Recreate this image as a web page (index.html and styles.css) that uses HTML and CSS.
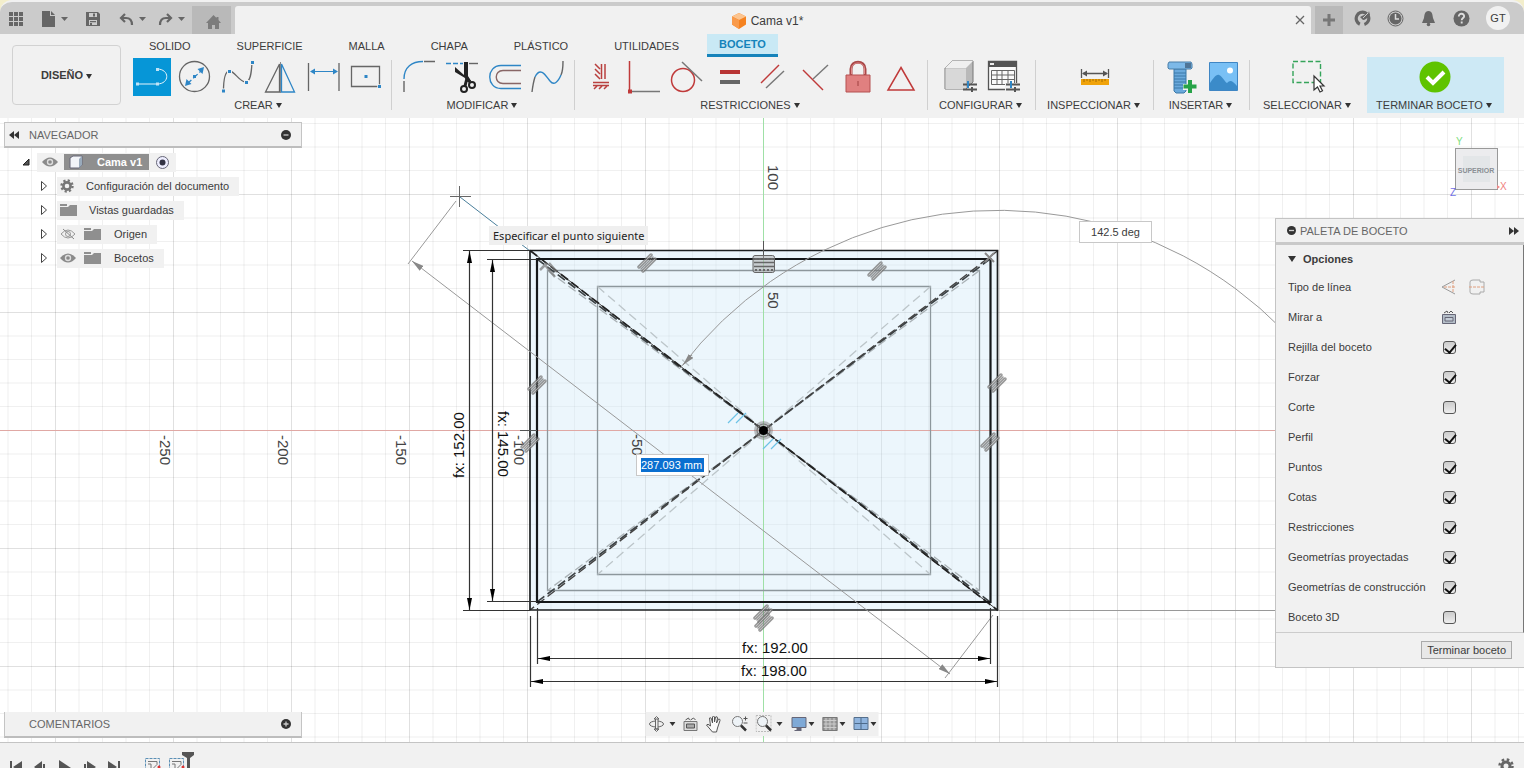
FILE: index.html
```html
<!DOCTYPE html>
<html lang="es">
<head>
<meta charset="utf-8">
<title>Cama v1*</title>
<link rel="stylesheet" href="styles.css">
</head>
<body>
<header class="titlebar">
  <div class="quick">
    <button class="ib ib-grid" aria-label="Panel de datos"><svg width="16" height="16" fill="#666"><path d="M1 1h4v4H1zM6 1h4v4H6zM11 1h4v4h-4zM1 6h4v4H1zM6 6h4v4H6zM11 6h4v4h-4zM1 11h4v4H1zM6 11h4v4H6zM11 11h4v4h-4z"/></svg></button>
    <button class="ib ib-file" aria-label="Archivo"><svg width="28" height="18" fill="#666"><path d="M2 1h8v5h5v11H2zM11 1l4 4h-4z"/><path d="M21 7h7l-3.500 4z"/></svg></button>
    <button class="ib ib-save" aria-label="Guardar"><svg width="16" height="16"><path d="M1 1h12l2 2v12H1z" fill="#666"/><path d="M4 2h8v4H4zM4 9h8v5H4z" fill="#ccc"/><path d="M8 2.500h2v3H8zM5 10h6v1.200H5zM5 12h2v2H5z" fill="#666"/></svg></button>
    <button class="ib ib-undo" aria-label="Deshacer"><svg width="28" height="16"><path d="M6 3L2 7l4 4M2.500 7H7c4 0 6 2 6 7" fill="none" stroke="#666" stroke-width="2.200"/><path d="M20 6h7l-3.500 4z" fill="#666"/></svg></button>
    <button class="ib ib-redo" aria-label="Rehacer"><svg width="28" height="16"><path d="M9 3l4 4-4 4M12.500 7H8c-4 0-6 2-6 7" fill="none" stroke="#666" stroke-width="2.200"/><path d="M20 6h7l-3.500 4z" fill="#666"/></svg></button>
  </div>
  <button class="home" aria-label="Inicio"><svg width="18" height="16" fill="#7c7c7c"><path d="M8.500 1L1 9h2v6h4v-4h3v4h4V9h2l-2.500-3V3h-2v1z"/></svg></button>
  <div class="doc">
    <span class="doc-title"><svg width="16" height="16"><path d="M8 0l7 3.500v8L8 16l-7-4.500v-8z" fill="#f58220"/><path d="M8 0l7 3.500L8 7 1 3.500z" fill="#fcc48f"/><path d="M1 3.500L8 7v9l-7-4.500z" fill="#f99a4a"/></svg>Cama v1*</span>
    <button class="close" aria-label="Cerrar"><svg width="10" height="10"><path d="M1 1l8 8M9 1L1 9" stroke="#666" stroke-width="1.300"/></svg></button>
  </div>
  <button class="plus" aria-label="Nuevo"><svg width="14" height="14"><path d="M7 1v12M1 7h12" stroke="#777" stroke-width="3"/></svg></button>
  <div class="account">
    <button class="ib" aria-label="Extensiones"><svg width="17" height="17"><circle cx="8.500" cy="8.500" r="6.300" fill="none" stroke="#666" stroke-width="3.200" stroke-dasharray="34 5.600" transform="rotate(115 8.500 8.500)"/><path d="M6 7q5-3 8-3l1-3 1 4q-4 5-7 5z" fill="#666"/><path d="M9 8l5-5" stroke="#ccc"/></svg></button>
    <button class="ib" aria-label="Estado del trabajo"><svg width="17" height="17"><circle cx="8.500" cy="8.500" r="7.500" fill="none" stroke="#666"/><circle cx="8.500" cy="8.500" r="6" fill="#666"/><path d="M8.500 4v5H12" fill="none" stroke="#ddd" stroke-width="1.500"/></svg></button>
    <button class="ib" aria-label="Notificaciones"><svg width="17" height="17" fill="#666"><path d="M8.500 1c-4 0-4 4-4.500 7l-2 5h13l-2-5c-.500-3-.500-7-4.500-7z"/><circle cx="8.500" cy="14.500" r="1.800"/></svg></button>
    <button class="ib" aria-label="Ayuda"><svg width="17" height="17"><circle cx="8.500" cy="8.500" r="8" fill="#666"/><path d="M5.800 6.500c0-4 5.600-3.300 5.300-.200-.200 1.700-2.400 1.700-2.400 4M8.700 11.500v2" fill="none" stroke="#ddd" stroke-width="1.900"/></svg></button>
    <button class="avatar">GT</button>
  </div>
</header>

<section class="toolbar">
  <button class="workspace">DISEÑO <span class="caret"></span></button>
  <div class="ribbon">
    <nav class="tabs">
      <button>SOLIDO</button><button>SUPERFICIE</button><button>MALLA</button><button>CHAPA</button><button>PLÁSTICO</button><button>UTILIDADES</button><button class="active">BOCETO</button>
    </nav>
    <div class="groups">
      <div class="group g-crear">
        <div class="tools">
          <button class="tool on" aria-label="Línea"><svg viewBox="0 0 38 38"><path d="M4 26h21M24 11c13 0 13 15 0 15" fill="none" stroke="#e6f4fb"/><path d="M3 24.500h3v3H3zM23 24.500h3v3h-3zM23 10h3v3h-3z" fill="#bfe3f7"/></svg></button>
          <button class="tool" aria-label="Círculo"><svg viewBox="0 0 38 38"><circle cx="18.500" cy="18.500" r="15" fill="none" stroke="#666" stroke-width="1.300"/><path d="M11 26l15-14" stroke="#2e86c6" stroke-width="1.300" stroke-dasharray="6 2.500"/><path d="M9 28l1.500-7 5 5zM28 9l-1.500 7-5-5zM17 17h3v3h-3z" fill="#2e86c6"/></svg></button>
          <button class="tool" aria-label="Spline"><svg viewBox="0 0 38 38"><path d="M4.500 33c0-12 2-20 6-20 5 0 10 11 16 11 5 0 6-9 6.500-20" fill="none" stroke="#666" stroke-width="1.300"/><path d="M3 31.500h3v3H3zM9 12h3v3H9zM26 23h3v3h-3zM32 3h3v3h-3z" fill="#2e86c6" stroke="#f1f1f1" stroke-width="2" paint-order="stroke"/></svg></button>
          <button class="tool" aria-label="Simetría"><svg viewBox="0 0 38 38"><path d="M17.500 6v28H3.500z" fill="none" stroke="#666" stroke-width="1.300"/><path d="M18.500 4v31" stroke="#888"/><path d="M19.500 6v28h13z" fill="none" stroke="#2e86c6" stroke-width="1.300"/></svg></button>
          <button class="tool" aria-label="Cota"><svg viewBox="0 0 38 38"><path d="M3.500 5v28M34 5v28" stroke="#666" stroke-width="1.300"/><path d="M6 13.500h26" stroke="#2e86c6"/><path d="M5 13.500l5-3v6zM33 13.500l-5-3v6z" fill="#2e86c6"/></svg></button>
          <button class="tool" aria-label="Rectángulo"><svg viewBox="0 0 38 38"><path d="M3.500 8.500h28v20h-28z" fill="none" stroke="#666" stroke-width="1.300"/><path d="M16.500 17h3v3h-3zM30 27h3v3h-3z" fill="#2e86c6" stroke="#f1f1f1" stroke-width="1.500" paint-order="stroke"/></svg></button>
        </div>
        <button class="glabel">CREAR <span class="caret"></span></button>
      </div>
      <div class="group g-mod">
        <div class="tools">
          <button class="tool" aria-label="Empalme"><svg viewBox="0 0 38 38" fill="none" stroke-width="1.400"><path d="M4 34V23M24 3.500h11" stroke="#666"/><path d="M4 21C4 9 12 3.500 23 3.500" stroke="#2e86c6"/></svg></button>
          <button class="tool" aria-label="Recortar"><svg viewBox="0 0 38 38"><path d="M3 5.500h17" stroke="#2e86c6" stroke-width="1.400" stroke-dasharray="5 2"/><path d="M26 5.500h9" stroke="#666" stroke-width="1.400"/><path d="M21 4h4v14l3 5-3 1-3-4-10-6V9l9 8z" fill="#222"/><circle cx="21" cy="31" r="3" fill="none" stroke="#222" stroke-width="2"/><circle cx="29" cy="27" r="3" fill="none" stroke="#222" stroke-width="2"/><path d="M22 28l2-8M23 19l4 5" stroke="#222" stroke-width="3"/></svg></button>
          <button class="tool" aria-label="Desfase"><svg viewBox="0 0 38 38" fill="none" stroke-width="1.400"><path d="M35 7.500H15c-15 0-15 23 0 23h20" stroke="#2e86c6"/><path d="M35 12.500H17c-9 0-9 13 0 13h18" stroke="#866"/></svg></button>
          <button class="tool" aria-label="Curva"><svg viewBox="0 0 38 38" fill="none" stroke-width="1.400"><path d="M3 34c1-8 2-12 3-15M32 17c2-4 2-9 2-14" stroke="#666"/><path d="M6 19C12 7 18 20 21 23c4 5 8 1 11-6" stroke="#2e86c6"/></svg></button>
        </div>
        <button class="glabel">MODIFICAR <span class="caret"></span></button>
      </div>
      <div class="group g-res">
        <div class="tools">
          <button class="tool" aria-label="Horizontal/Vertical"><svg viewBox="0 0 38 38" fill="none" stroke="#b9403f" stroke-width="1.500"><path d="M19.500 6v15M23 6v15M11 24.500h16M11 27.500h16M13 6l5 5M13 11l5 5M13 16l5 5M12 31l3-3M17 31l3-3M22 31l3-3"/></svg></button>
          <button class="tool" aria-label="Coincidente"><svg viewBox="0 0 38 38"><path d="M4.500 3v30" stroke="#c03a3a" stroke-width="1.500"/><path d="M6 33.500h29" stroke="#777" stroke-width="1.500"/><path d="M3 31.500h4v4H3z" fill="#c03a3a"/></svg></button>
          <button class="tool" aria-label="Tangente"><svg viewBox="0 0 38 38" fill="none" stroke-width="1.500"><circle cx="15" cy="22" r="11.500" stroke="#c03a3a"/><path d="M14 4l20 19" stroke="#777"/></svg></button>
          <button class="tool" aria-label="Igual"><svg viewBox="0 0 38 38"><path d="M9 12h20v4H9z" fill="#b93535"/><path d="M9 22h20v4H9z" fill="#666"/></svg></button>
          <button class="tool" aria-label="Paralelo"><svg viewBox="0 0 38 38" stroke-width="1.400"><path d="M7 25L25 7" stroke="#c03a3a"/><path d="M12 30L30 13" stroke="#777"/></svg></button>
          <button class="tool" aria-label="Perpendicular"><svg viewBox="0 0 38 38" stroke-width="1.400"><path d="M6 12l20 20" stroke="#c03a3a"/><path d="M16 21L31 7" stroke="#777"/></svg></button>
          <button class="tool" aria-label="Bloquear"><svg viewBox="0 0 38 38"><path d="M11 17v-6c0-9 14-9 14 0v6" fill="none" stroke="#a94848" stroke-width="3"/><path d="M11.500 16v-5c0-8 13-8 13 0v5" fill="none" stroke="#e08c8c"/><path d="M6 17h24v17H6z" fill="#e08080" stroke="#b55050"/><path d="M18 23v5" stroke="#a04040"/></svg></button>
          <button class="tool" aria-label="Punto medio"><svg viewBox="0 0 38 38"><path d="M18 9.500L31 32H5z" fill="none" stroke="#c03a3a" stroke-width="1.500"/></svg></button>
        </div>
        <button class="glabel">RESTRICCIONES <span class="caret"></span></button>
      </div>
      <div class="group g-conf">
        <div class="tools">
          <button class="tool" aria-label="Configurar modelo"><svg viewBox="0 0 38 38"><path d="M3 10l7-7h21v21l-7 7H3z" fill="#b9b9b9" stroke="#777"/><path d="M3 10l7-7h21l-7 7z" fill="#efefef"/><path d="M3.500 10.500H24V31H3.500z" fill="#d8d8d8"/><path d="M21 26.500h14M21 31.500h14" stroke="#555" stroke-width="2"/><path d="M26 23v7" stroke="#2e86c6" stroke-width="2"/><path d="M30 29v5" stroke="#555" stroke-width="2"/></svg></button>
          <button class="tool" aria-label="Tabla de configuración"><svg viewBox="0 0 38 38"><path d="M3.500 3.500h28v28h-28z" fill="#fafafa" stroke="#555" stroke-width="1.300"/><path d="M3 3h29v6H3z" fill="#555"/><path d="M5 5h4v2H5z" fill="#eee"/><path d="M6.500 12.500h23v14h-23zM6.500 17h23M6.500 21.500h23M12 12v14M17 12v14M23 12v14" fill="none" stroke="#666"/><path d="M20 25h15v9H20z" fill="#f1f1f1"/><path d="M21 26.500h14M21 31.500h14" stroke="#555" stroke-width="2"/><path d="M26 23v7" stroke="#2e86c6" stroke-width="2"/><path d="M30 29v5" stroke="#555" stroke-width="2"/></svg></button>
        </div>
        <button class="glabel">CONFIGURAR <span class="caret"></span></button>
      </div>
      <div class="group g-insp">
        <div class="tools">
          <button class="tool" aria-label="Medir"><svg viewBox="0 0 38 38"><path d="M5.500 11v9M32.500 11v9M7 15.500h24" stroke="#555" stroke-width="1.300"/><path d="M6 15.500l5-3v6zM32 15.500l-5-3v6z" fill="#555"/><path d="M5 21h28v6H5z" fill="#f0a30a"/><path d="M8 21v3M11 21v2M14 21v3M17 21v2M20 21v3M23 21v2M26 21v3M29 21v2" stroke="#a66c00"/></svg></button>
        </div>
        <button class="glabel">INSPECCIONAR <span class="caret"></span></button>
      </div>
      <div class="group g-ins">
        <div class="tools">
          <button class="tool" aria-label="Insertar elemento"><svg viewBox="0 0 38 38"><path d="M12 11h12v22l-2 2h-8l-2-2z" fill="#6aa9dc" stroke="#3a78a8"/><path d="M12 15h12M12 18h12M12 21h12M12 24h12M12 27h12M12 30h12" stroke="#3a78a8"/><path d="M7 4h22l1 2v4l-1 1H7l-1-1V6z" fill="#7db9e8" stroke="#4a7ea8"/><path d="M23 5h6v5h-6z" fill="#4f7597"/><path d="M28 22v14M21 29h14" stroke="#f1f1f1" stroke-width="6"/><path d="M28 22v13M21.500 28.500h13" stroke="#27a348" stroke-width="4"/></svg></button>
          <button class="tool" aria-label="Insertar imagen"><svg viewBox="0 0 38 38"><path d="M4.500 4.500h28v28h-28z" fill="#79c0f5" stroke="#3f86c4"/><circle cx="25" cy="12.500" r="3" fill="#fff"/><path d="M5 25c3-4 6-9 9-8s6 7 8 8c3-3 5-3 10 3v4H5z" fill="#3b8bc9"/></svg></button>
        </div>
        <button class="glabel">INSERTAR <span class="caret"></span></button>
      </div>
      <div class="group g-sel">
        <div class="tools">
          <button class="tool" aria-label="Seleccionar"><svg viewBox="0 0 38 38"><path d="M3 3.500h27.500v21H3z" fill="none" stroke="#35a45a" stroke-width="1.400" stroke-dasharray="5 2.500"/><path d="M24 18v14l3.500-3 2.500 5 2.500-1.200-2.500-4.800h4z" fill="#fff" stroke="#333" stroke-width="1.200"/></svg></button>
        </div>
        <button class="glabel">SELECCIONAR <span class="caret"></span></button>
      </div>
      <div class="group g-fin">
        <div class="tools">
          <button class="tool" aria-label="Terminar boceto"><svg viewBox="0 0 38 38"><circle cx="18" cy="19" r="15.500" fill="#5fc300"/><path d="M10 19l6 6 11-11" fill="none" stroke="#fff" stroke-width="4"/></svg></button>
        </div>
        <button class="glabel">TERMINAR BOCETO <span class="caret"></span></button>
      </div>
    </div>
  </div>
</section>

<main class="canvas">
  <svg class="sketch" aria-label="Boceto">
    <defs>
      <pattern id="grid" width="118" height="118" patternUnits="userSpaceOnUse" x="763" y="312">
        <path d="M24 0v118M47.500 0v118M71 0v118M94.500 0v118M0 24h118M0 47.500h118M0 71h118M0 94.500h118" stroke="#000" stroke-opacity=".060" fill="none"/>
        <path d="M.500 0v118M0 .500h118" stroke="#000" stroke-opacity=".120" fill="none"/>
      </pattern>
      <marker id="ab" viewBox="0 0 12 6" markerWidth="12" markerHeight="6" refX="12" refY="3" orient="auto-start-reverse" markerUnits="userSpaceOnUse"><path d="M0 .500L12 3 0 5.500z" fill="#000"/></marker>
      <marker id="ag" viewBox="0 0 12 6" markerWidth="12" markerHeight="6" refX="12" refY="3" orient="auto-start-reverse" markerUnits="userSpaceOnUse"><path d="M0 0L12 3 0 6z" fill="#888"/></marker>
      <g id="par" stroke="#777" stroke-opacity=".75" stroke-width="3.500" stroke-linecap="round" fill="none"><path d="M-8 4L4-8M-4 8L8-4"/><path d="M-8 4L4-8M-4 8L8-4" stroke="#ddd" stroke-width=".800"/><path d="M-6 6L6-6" stroke-width="1.500"/></g>
    </defs>
    <g transform="translate(0 -118)">
      <rect x="0" y="118" width="100%" height="100%" fill="url(#grid)"/>
      <rect x="530" y="250" width="468" height="360" fill="#cfe9f8" fill-opacity=".400"/>
      <path d="M0 430.500h2600" stroke="#e0a8a4"/>
      <path d="M763.500 118v1400" stroke="#9fe0a6"/>
      <g class="scale">
        <text transform="translate(768 165) rotate(90)">100</text>
        <text transform="translate(768 292) rotate(90)">50</text>
        <text transform="translate(632 434) rotate(90)">-50</text>
        <text transform="translate(514 435) rotate(90)">-100</text>
        <text transform="translate(396 435) rotate(90)">-150</text>
        <text transform="translate(278 435) rotate(90)">-200</text>
        <text transform="translate(160 435) rotate(90)">-250</text>
      </g>
      <g fill="none">
        <path d="M547.500 270.500h432v320h-432zM597.500 286.500h333v288h-333z" stroke="#8d979c" stroke-width="1.300"/>
        <path d="M597.500 286.500l333 288M930.500 286.500l-333 288" stroke="#bcc5c9" stroke-width="1.300" stroke-dasharray="9 5"/>
        <path d="M547.500 270.500l432 320M979.500 270.500l-432 320" stroke="#a9b1b5" stroke-width="1.300" stroke-dasharray="9 4"/>
        <path d="M537 259l453 343M990 259L537 602" stroke="#3c4245" stroke-width="1.700" stroke-dasharray="9 4"/>
        <path d="M530 250.500l468 360" stroke="#444"/>
        <path d="M530 250.500l468 360" stroke="#222" stroke-width="1.700" stroke-dasharray="9 4"/>
        <path d="M998 250.500L530 610" stroke="#444" stroke-width="1.400" stroke-dasharray="9 4"/>
        <path d="M530 250.500h467.500V610H530z" stroke="#1c1f20" stroke-width="1.700"/>
        <path d="M537 259h453.500v343H537z" stroke="#15181a" stroke-width="2.200"/>
        <path d="M460 197l70 54" stroke="#4a7f9b"/>
        <path d="M450 196.500h21M459.500 186v21" stroke="#666"/>
        <path d="M763.500 241v18M520 430.500h17" stroke="#555"/>
        <path d="M998 610.500h1600" stroke="#999"/>
        <path d="M456 201l-48 63M993 615l-48 63M681 367A399 399 0 0 1 1397 610" stroke="#999"/>
        <path d="M412 261l538 413" stroke="#999" marker-start="url(#ag)" marker-end="url(#ag)"/>
        <path d="M683 365l9-10" stroke="#999" marker-start="url(#ag)"/>
        <g stroke="#333" stroke-width="1.200">
          <path d="M463 250.500h67M463 610.500h67M487 259.500h50M487 601.500h50M530.500 616v71M537.500 608v56M990.500 608v56M997.500 616v71"/>
          <g marker-start="url(#ab)" marker-end="url(#ab)">
            <path d="M469.500 251v359"/><path d="M492.500 260v341"/><path d="M538 658.500h452"/><path d="M531 681.500h466"/>
          </g>
        </g>
      </g>
      <g class="dims">
        <text transform="translate(464 478) rotate(-90)">fx: 152.00</text>
        <text transform="translate(498 411) rotate(90)">fx: 145.00</text>
        <text x="742" y="653">fx: 192.00</text>
        <text x="741" y="676">fx: 198.00</text>
      </g>
      <use href="#par" x="647" y="263"/><use href="#par" x="877" y="271"/><use href="#par" x="537" y="385"/><use href="#par" x="530" y="443"/><use href="#par" x="997" y="383"/><use href="#par" x="990" y="442"/><use href="#par" x="763" y="614"/><use href="#par" x="764" y="622"/>
      <path d="M540 270l7-7M545 265l10 12M549 263l8 9" stroke="#777" stroke-opacity=".700" stroke-width="2.500"/>
      <path d="M985 253l9 9M994 253l-9 9" stroke="#888" stroke-width="2"/>
      <g fill="none" stroke="#666"><rect x="753" y="255.500" width="21.500" height="17" rx="2" fill="#aaa" fill-opacity=".500"/><path d="M754 262.500h20M754 266.500h20" stroke-width="1.300"/><path d="M755 259h18M755 270h18" stroke-width="2" stroke-dasharray="2 2"/></g>
      <path d="M728 423l10-10M736 423l10-10M763 449l10-10M771 449l10-10" stroke="#6cc3e6" stroke-width="1.200"/>
      <circle cx="763.500" cy="430.500" r="9.500" fill="#777" fill-opacity=".450"/>
      <circle cx="763.500" cy="430.500" r="6.500" fill="none" stroke="#777"/>
      <circle cx="763.500" cy="430.500" r="4.500" fill="#000"/>
    </g>
  </svg>

  <div class="hint">Especificar el punto siguiente</div>
  <input class="dimbox angle" aria-label="Ángulo" value="142.5 deg">
  <div class="dimbox length"><input aria-label="Longitud" value="287.093 mm"></div>

  <svg class="viewcube" width="60" height="64" aria-label="Cubo de vista">
    <rect x="7.500" y="12.500" width="42" height="41" fill="#ececee" stroke="#999"/>
    <rect x="15" y="20" width="27" height="26" fill="#e3e6e8"/>
    <text x="28" y="37" class="face">SUPERIOR</text>
    <text x="8" y="9" class="ax y">Y</text><text x="2" y="60" class="ax z">Z</text><text x="52" y="54" class="ax x">X</text>
    <path d="M49 49l3 2-3 2" fill="#e88"/>
  </svg>

  <aside class="browser">
    <div class="panelbar"><svg width="10" height="8" fill="#333"><path d="M5 0v8L0 4zM10 0v8L5 4z"/></svg><span>NAVEGADOR</span><button aria-label="Minimizar"><svg width="10" height="10"><circle cx="5" cy="5" r="5" fill="#333"/><path d="M2.500 5h5" stroke="#ccc" stroke-width="1.300"/></svg></button></div>
    <ul class="tree">
      <li class="root"><svg width="8" height="8"><path d="M7 1v6H1z" fill="#555" stroke="#222"/></svg>
        <div class="node"><svg width="16" height="12"><use href="#eye"/></svg>
        <span class="sel"><svg width="16" height="14"><path d="M2 3l3-2h9v9l-3 3H2z" fill="#f2f4f8" stroke="#667"/><path d="M11 4l3-3v9l-3 3z" fill="#9ab"/></svg><b>Cama v1</b></span>
        <svg width="15" height="15"><circle cx="7.500" cy="7.500" r="6" fill="#eef" stroke="#667"/><circle cx="7.500" cy="7.500" r="3" fill="#334"/></svg></div></li>
      <li><svg width="8" height="12"><use href="#tri"/></svg><div class="node"><svg width="14" height="14"><circle cx="7" cy="7" r="3.600" fill="none" stroke="#777" stroke-width="2.600"/><circle cx="7" cy="7" r="5.500" fill="none" stroke="#777" stroke-width="2.400" stroke-dasharray="2.160 2.160"/></svg><span class="t1">Configuración del documento</span></div></li>
      <li><svg width="8" height="12"><use href="#tri"/></svg><div class="node"><svg width="17" height="12"><use href="#folder"/></svg><span class="t1">Vistas guardadas</span></div></li>
      <li><svg width="8" height="12"><use href="#tri"/></svg><div class="node n3"><svg width="16" height="12"><path d="M1 6q7-8 14 0-7 8-14 0z" fill="none" stroke="#999"/><circle cx="8" cy="6" r="2.500" fill="none" stroke="#999"/><path d="M3 1l11 10" stroke="#888"/></svg><svg width="17" height="12"><use href="#folder"/></svg><span>Origen</span></div></li>
      <li><svg width="8" height="12"><use href="#tri"/></svg><div class="node n3"><svg width="16" height="12"><use href="#eye"/></svg><svg width="17" height="12"><use href="#folder"/></svg><span>Bocetos</span></div></li>
    </ul>
    <svg width="0" height="0" class="defs"><defs>
      <g id="eye"><path d="M0 6q8-9 16 0-8 9-16 0z" fill="#8a8a8a"/><circle cx="8" cy="6" r="3.200" fill="#ddd"/><circle cx="8" cy="6" r="1.800" fill="#888"/></g>
      <path id="tri" d="M1.500 1.500l5 4.500-5 4.500z" fill="none" stroke="#444"/>
      <path id="folder" d="M0 0h7v2H0zM0 3h8l2-2h7v11H0z" fill="#8f8f8f"/>
    </defs></svg>
  </aside>

  <aside class="comments panelbar"><span>COMENTARIOS</span><button aria-label="Añadir"><svg width="10" height="10"><circle cx="5" cy="5" r="5" fill="#333"/><path d="M2.500 5h5M5 2.500v5" stroke="#ccc" stroke-width="1.300"/></svg></button></aside>

  <aside class="palette">
    <div class="phead"><svg width="9" height="9"><circle cx="4.500" cy="4.500" r="4.500" fill="#333"/><path d="M2 4.500h5" stroke="#ccc" stroke-width="1.300"/></svg><span>PALETA DE BOCETO</span><svg class="ff" width="10" height="8" fill="#333"><path d="M0 0v8l5-4zM5 0v8l5-4z"/></svg></div>
    <div class="pbody">
      <h2><svg width="8" height="7"><path d="M0 1h8L4 7z" fill="#333"/></svg>Opciones</h2>
      <div class="row"><span>Tipo de línea</span><span class="ctl"><button aria-label="Construcción"><svg width="16" height="16" fill="none"><path d="M14 1L1 8l13 7" stroke="#999"/><path d="M3 8h12M12 2v12" stroke="#e0a080" stroke-dasharray="3 1"/></svg></button><button aria-label="Línea de centro"><svg width="16" height="16" fill="none"><path d="M1 3q0-2 3-2h7v2h4v10h-4v2H4q-3 0-3-2z" stroke="#aaa"/><path d="M0 8h16" stroke="#e0a080" stroke-dasharray="3 1"/></svg></button></span></div>
      <div class="row"><span>Mirar a</span><span class="ctl"><button aria-label="Mirar a"><svg width="16" height="15"><path d="M1.500 4.500h13v9h-13z" fill="#b4bec8" stroke="#667"/><path d="M4 7.500h8v3.500H4z" fill="#c3ccd6" stroke="#667"/><path d="M3 3l3-2 1 2M8 3l2-2 2 2" fill="none" stroke="#555"/></svg></button></span></div>
      <label class="row"><span>Rejilla del boceto</span><input type="checkbox" checked></label>
      <label class="row"><span>Forzar</span><input type="checkbox" checked></label>
      <label class="row"><span>Corte</span><input type="checkbox"></label>
      <label class="row"><span>Perfil</span><input type="checkbox" checked></label>
      <label class="row"><span>Puntos</span><input type="checkbox" checked></label>
      <label class="row"><span>Cotas</span><input type="checkbox" checked></label>
      <label class="row"><span>Restricciones</span><input type="checkbox" checked></label>
      <label class="row"><span>Geometrías proyectadas</span><input type="checkbox" checked></label>
      <label class="row"><span>Geometrías de construcción</span><input type="checkbox" checked></label>
      <label class="row"><span>Boceto 3D</span><input type="checkbox"></label>
    </div>
    <div class="pfoot"><button>Terminar boceto</button></div>
  </aside>

  <div class="navbar">
    <button aria-label="Órbita"><svg width="28" height="18" fill="none" stroke="#666"><ellipse cx="9" cy="9" rx="7" ry="3"/><path d="M8 4v10h2.500V4M6.500 4L9 1.500 11.500 4zM6.500 14L9 16.500l2.500-2.500z" fill="#eee"/><path d="M22 7h6l-3 4z" fill="#333" stroke="none"/></svg></button>
    <button aria-label="Mirar a"><svg width="16" height="16"><path d="M1.500 5.500h13v9h-13z" fill="#ddd" stroke="#777"/><path d="M4 8h8v4H4z" fill="#aaa" stroke="#555"/><path d="M3 4l3-2 1 2M8 4l3-2 2 2" fill="none" stroke="#555"/></svg></button>
    <button aria-label="Encuadre"><svg width="18" height="18"><path d="M7 17L1 10q1-2 4 1L4 3q1.500-1 2 1l1 4V2q1-2 2 0v5l1-5q2-1 2 1l-1 5 2-4q2 0 1.500 1.500L12 13l-1 4z" fill="#fafafa" stroke="#555"/></svg></button>
    <button aria-label="Zoom"><svg width="18" height="18"><circle cx="7" cy="6.500" r="5" fill="#eef3f7" stroke="#777"/><path d="M10.500 10.500l5 5" stroke="#333" stroke-width="2.500"/><path d="M13 3.500h4M15 1.500v4M13 8h4" stroke="#555"/></svg></button>
    <button aria-label="Ajustar"><svg width="28" height="18"><path d="M.500.500h15v16H.500z" fill="none" stroke="#bbb" stroke-dasharray="2 1"/><circle cx="7" cy="6.500" r="5" fill="#eef3f7" stroke="#777"/><path d="M10.500 10.500l5 5" stroke="#333" stroke-width="2.500"/><path d="M21 7h6l-3 4z" fill="#333"/></svg></button>
    <button aria-label="Visualización"><svg width="24" height="18"><path d="M1.500 2.500h14v10h-14z" fill="#7fa9d6" stroke="#667"/><path d="M6 13h5v3H4v-1h2z" fill="#667"/><path d="M18 7h6l-3 4z" fill="#333"/></svg></button>
    <button aria-label="Rejilla"><svg width="24" height="18"><path d="M1 2h15v14H1z" fill="#999"/><path d="M1 5.500h15M1 9h15M1 12.500h15M4.500 2v14M8.500 2v14M12.500 2v14" stroke="#ccc"/><path d="M1.500 2.500h14v13h-14z" fill="none" stroke="#777"/><path d="M18 7h6l-3 4z" fill="#333"/></svg></button>
    <button aria-label="Ventanas"><svg width="24" height="18"><path d="M1.500 2.500h14v12h-14z" fill="#8fb4de" stroke="#556f8c"/><path d="M8.500 3v12M2 8.500h13" stroke="#4d6a8a"/><path d="M18 7h6l-3 4z" fill="#333"/></svg></button>
  </div>
</main>

<footer class="timeline">
  <button aria-label="Inicio"><svg width="12" height="14" fill="#555"><path d="M0 1h2v12H0zM12 1v12L3 7z"/></svg></button>
  <button aria-label="Atrás"><svg width="12" height="14" fill="#555"><path d="M8 1v12L0 7zM9 4h2v9H9z"/></svg></button>
  <button aria-label="Reproducir"><svg width="13" height="16" fill="#555"><path d="M1 0l12 8-12 8z"/></svg></button>
  <button aria-label="Adelante"><svg width="13" height="14" fill="#555"><path d="M4 1v12l9-6zM1 4h2v9H1z"/></svg></button>
  <button aria-label="Final"><svg width="12" height="14" fill="#555"><path d="M0 1v12l9-6zM10 1h2v12h-2z"/></svg></button>
  <svg class="feat" width="52" height="28"><g fill="none" stroke="#5a8fb5"><path d="M1.500 9.500h14v16h-14zM25.500 9.500h14v16h-14z" stroke-dasharray="3 1"/><path d="M4 12.500h9v3l-4 4M7 20v-5H4M28 12.500h9v3l-4 4M31 20v-5h-3" stroke="#777"/></g><circle cx="15" cy="18" r="1.500" fill="#d33"/><circle cx="39" cy="18" r="1.500" fill="#d33"/><path d="M38 3h12v3l-4 3v19h-3V9l-5-3z" fill="#555"/></svg>
  <button class="gear" aria-label="Preferencias"><svg width="16" height="16"><circle cx="8" cy="8" r="4" fill="none" stroke="#666" stroke-width="3"/><circle cx="8" cy="8" r="6.500" fill="none" stroke="#666" stroke-width="2.500" stroke-dasharray="2.550 2.550"/></svg></button>
</footer>
</body>
</html>
```
FILE: styles.css
```css
* { box-sizing: border-box; }
body {
  margin: 0;
  height: 100vh;
  display: flex;
  flex-direction: column;
  overflow: hidden;
  background: #f3eecb;
  color: #3c3c3c;
  font: 11px/16px "Liberation Sans", Arial, sans-serif;
}
button {
  font: inherit;
  color: inherit;
  border: 0;
  padding: 0;
  margin: 0;
  background: none;
}
input { font: inherit; color: inherit; margin: 0; }
svg { display: block; flex: none; }

.titlebar {
  flex: none;
  display: flex;
  align-items: stretch;
  height: 34px;
  padding-top: 4px;
  border-top: 2px solid #f1f1f1;
  background: #cbcbcb;
  border-radius: 12px 12px 0 0;
}
.quick { display: flex; align-items: center; width: 192px; padding-left: 8px; padding-bottom: 2px; }
.ib-file { margin-left: 16px; }
.ib-save { margin-left: 17px; }
.ib-undo { margin-left: 18px; }
.ib-redo { margin-left: 11px; }
.home {
  width: 39px;
  display: flex;
  align-items: center;
  justify-content: center;
  background: #b9b9b9;
  padding-top: 3px;
  padding-left: 4px;
}
.doc {
  flex: 1;
  display: flex;
  align-items: center;
  margin-left: 4px;
  padding-right: 6px;
  background: #f1f1f1;
  border-radius: 3px 3px 0 0;
}
.doc-title {
  flex: 1;
  display: flex;
  align-items: center;
  justify-content: center;
  gap: 4px;
  padding-left: 4px;
  padding-top: 2px;
  font-size: 12px;
}
.plus { width: 28px; margin-left: 4px; display: flex; align-items: center; justify-content: center; background: #b9b9b9; }
.account { display: flex; align-items: center; gap: 16px; padding: 0 14px 4px 11px; }
.avatar { width: 24px; height: 24px; border-radius: 50%; background: #f1f1f1; }

.toolbar { flex: none; display: flex; height: 84px; background: #f1f1f1; }
.workspace {
  flex: none;
  width: 109px;
  height: 60px;
  margin: 11px 0 0 12px;
  border: 1px solid #d2d2d2;
  border-radius: 4px;
  font-weight: bold;
}
.caret {
  display: inline-block;
  vertical-align: middle;
  border: 3px solid transparent;
  border-top: 5px solid #333;
  border-bottom: 0;
}
.ribbon { flex: 1; min-width: 0; }
.tabs { display: flex; height: 23px; padding-left: 5px; }
.tabs button { padding: 0 23px; }
.tabs .active {
  margin-left: 5px;
  padding: 0 12px;
  background: #c9e9f5;
  border-bottom: 3px solid #1583bb;
  color: #1583bb;
  font-weight: bold;
}
.groups { display: flex; }
.group { display: flex; flex-direction: column; align-items: center; flex: none; height: 56px; padding-top: 1px; position: relative; }
.group::after { content: ""; position: absolute; right: 0; top: 3px; bottom: 3px; width: 1px; background: #d0d0d0; }
.g-sel::after, .g-fin::after { display: none; }
.tools { display: flex; gap: 5px; }
.tool { width: 38px; height: 38px; }
.tool.on { background: #0696d7; }
.glabel { height: 18px; padding-right: 3px; white-space: nowrap; }
.g-crear { padding-left: 12px; padding-right: 6px; }
.g-mod { padding-left: 8px; padding-right: 8px; }
.g-res { padding-left: 7px; padding-right: 7px; }
.g-conf { width: 108px; }
.g-insp { width: 118px; }
.g-ins { width: 96px; }
.g-sel { width: 117px; }
.g-fin { width: 137px; background: #cde9f5; }

.canvas { flex: 1; min-height: 0; position: relative; overflow: hidden; background: #fff; }
.sketch { width: 100%; height: 100%; }
.scale text { font-size: 15px; fill: #444; }
.dims text { font-size: 15px; fill: #111; }

.hint {
  position: absolute;
  left: 489px;
  top: 108px;
  padding: 1px 4px;
  background: #efefef;
  color: #222;
  font: 11px/17px "Noto Sans", sans-serif;
}
.dimbox { position: absolute; background: #fff; border: 1px solid #c8c8c8; }
.angle { left: 1079px; top: 103px; width: 73px; height: 22px; padding: 0; text-align: center; }
.length { left: 636px; top: 336px; padding: 3px 4px; }
.length input { display: block; width: 63px; height: 14px; padding: 0; border: 0; background: #0a6fd0; color: #fff; }

.viewcube { position: absolute; right: 16px; top: 18px; }
.face { font: bold 7px "Liberation Sans", sans-serif; fill: #8a9095; text-anchor: middle; }
.ax { font: 10px "Liberation Sans", sans-serif; }
.ax.y { fill: #7fe07f; }
.ax.z { fill: #7070e8; }
.ax.x { fill: #f08080; }

.panelbar {
  display: flex;
  align-items: center;
  height: 26px;
  padding: 0 10px 0 4px;
  background: #f1f1f1;
  border: 1px solid #c4c4c4;
  border-bottom: 2px solid #bdbdbd;
  color: #666;
}
.panelbar span { flex: 1; margin-left: 10px; }
.browser { position: absolute; left: 4px; top: 4px; width: 298px; }
.comments { position: absolute; left: 4px; bottom: 4px; width: 298px; border-top: 0; }
.comments span { margin-left: 20px; }
.defs { position: absolute; }

.tree { list-style: none; margin: 0; padding: 2px 0 0 18px; }
.tree li { display: flex; align-items: center; height: 24px; gap: 9px; padding-left: 18px; }
.tree .root { padding-left: 0; gap: 7px; }
.node { display: flex; align-items: center; height: 19px; gap: 8px; padding: 0 10px 0 3px; background: #f1f1f1; }
.root .node { gap: 6px; padding: 0 6px 0 5px; }
.node .t1 { margin-left: 4px; }
.node.n3 span { margin-left: 5px; }
.sel { display: flex; align-items: center; height: 16px; gap: 13px; padding: 0 7px 0 4px; background: #8f8f8f; color: #fff; }

.palette { position: absolute; right: 0; top: 100px; width: 249px; background: #f1f1f1; border: 1px solid #c4c4c4; border-right: 0; }
.phead { display: flex; align-items: center; height: 26px; gap: 4px; padding: 0 5px 0 11px; border-bottom: 3px solid #c9c9c9; color: #666; }
.phead .ff { margin-left: auto; }
.pbody { padding: 0 12px; border-right: 1px solid #777; border-bottom: 1px solid #ccc; }
.pbody h2 { display: flex; align-items: center; gap: 7px; height: 27px; margin: 0; font-size: 11px; }
.row { display: grid; grid-template-columns: 1fr 70px; align-items: center; height: 30px; }
.ctl { display: flex; gap: 12px; }
.row input {
  appearance: none;
  position: relative;
  justify-self: start;
  margin-left: 2px;
  width: 13px;
  height: 13px;
  border: 1px solid #555;
  border-radius: 3px;
  background: linear-gradient(#ccc, #eee);
}
.row input:checked::before {
  content: "";
  position: absolute;
  left: 3px;
  top: 0;
  width: 5px;
  height: 9px;
  border: solid #111;
  border-width: 0 2px 2px 0;
  transform: rotate(40deg);
}
.pfoot { display: flex; justify-content: flex-end; padding: 8px 12px; }
.pfoot button { height: 18px; padding: 0 5px; border: 1px solid #aaa; background: #e8e8e8; }

.navbar {
  position: absolute;
  left: 50%;
  bottom: 6px;
  transform: translateX(-50%);
  display: flex;
  align-items: center;
  gap: 7px;
  height: 24px;
  padding: 0 2px;
  background: #f0f0f0;
}

.timeline {
  flex: none;
  display: flex;
  align-items: flex-start;
  height: 26px;
  gap: 12px;
  padding: 0 10px;
  overflow: hidden;
  background: #f1f1f1;
  border-top: 1px solid #c4c4c4;
}
.timeline button { margin-top: 17px; }
.feat { margin-left: 12px; margin-top: 6px; }
.timeline .gear { margin-left: auto; margin-top: 15px; }
```
